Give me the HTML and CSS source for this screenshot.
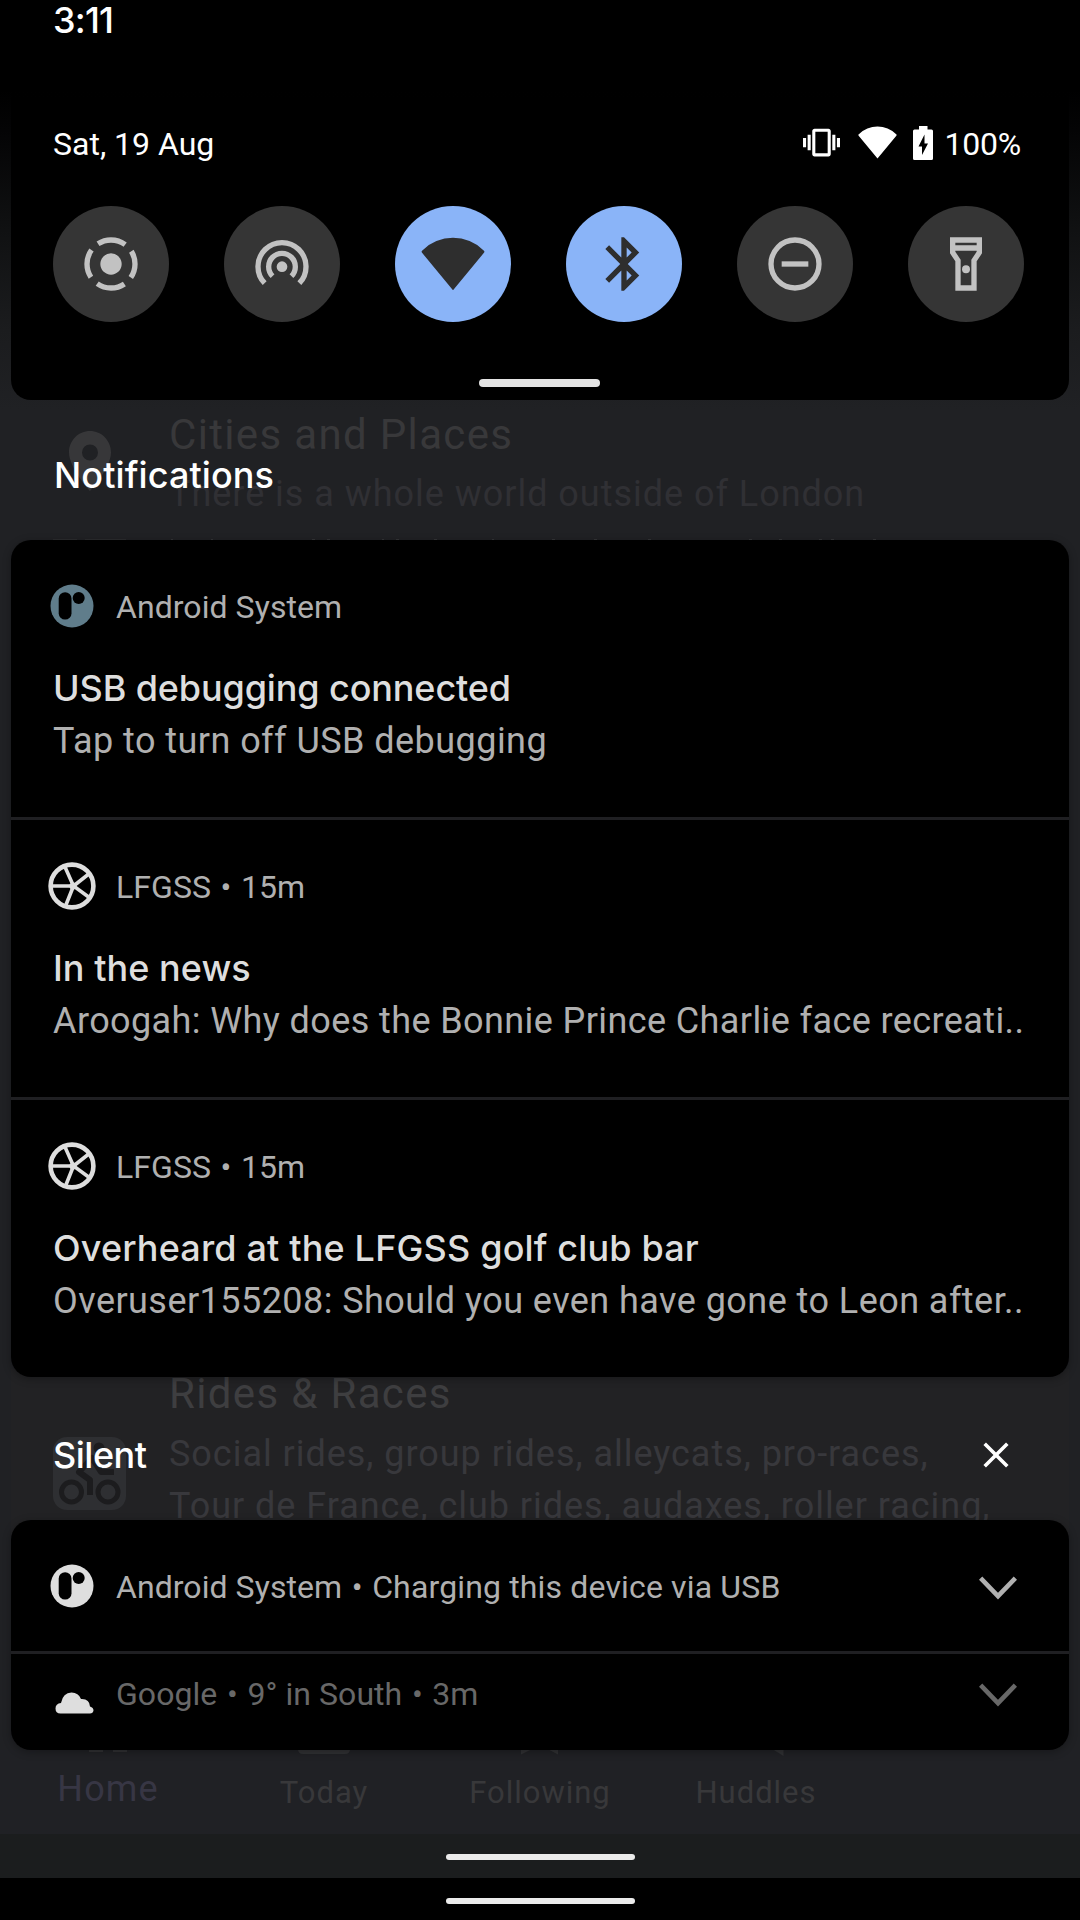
FILE: index.html
```html
<!DOCTYPE html>
<html lang="en">
<head>
<meta charset="utf-8">
<title>Notification shade</title>
<link rel="stylesheet" href="styles.css">
</head>
<body>
<svg class="defs" width="0" height="0" aria-hidden="true">
  <symbol id="wheel" viewBox="0 0 48 48">
    <circle cx="24" cy="24" r="21.400" fill="none" stroke="currentColor" stroke-width="4.600"/>
    <path d="M1.500 24H25.500M17 5 25.500 24 17.700 43.500M42 11 25.500 24 42 36" fill="none" stroke="currentColor" stroke-width="3.600"/>
    <circle cx="25" cy="24" r="3.600" fill="currentColor"/>
  </symbol>
  <symbol id="system" viewBox="0 0 48 48">
    <circle cx="24" cy="24" r="21.500" fill="currentColor"/>
    <rect x="10.700" y="10.200" width="12.800" height="27.400" rx="6.400" fill="#000"/>
    <circle cx="30.700" cy="16" r="6" fill="#000"/>
  </symbol>
  <symbol id="chevron" viewBox="0 0 38 24">
    <path d="M1.600 2.100 19 20.200 36.400 2.100" fill="none" stroke="currentColor" stroke-width="4.600"/>
  </symbol>
  <symbol id="wifi" viewBox="0 0 24 24">
    <path d="M12 21.800 0.400 7.800Q0 7.300.5 6.900A16.400 16.400 0 0 1 23.500 6.900Q24 7.300 23.600 7.800Z" fill="currentColor"/>
  </symbol>
</svg>

<div class="screen">
  <div class="app">
    <article class="forum forum-cities">
      <div class="forum-icon">
        <svg class="pin" width="73" height="62" viewBox="0 0 73 62"><path fill-rule="evenodd" d="M37 0C25.400 0 16 9.400 16 21.500 16 37 37 60 37 60S58 37 58 21.500C58 9.400 48.600 0 37 0ZM37 13.500a8 8 0 1 1 0 16 8 8 0 0 1 0-16Z" fill="#373739"/></svg>
        <svg class="next-icon" width="73" height="2" viewBox="0 0 73 2"><path d="M0 0h24v2H0zM32 0h41v2H32z" fill="#2b2c2e"/></svg>
      </div>
      <div class="forum-body">
        <h3>Cities and Places</h3>
        <p>There is a whole world outside of London</p>
        <svg class="cut-line" width="600" height="2" viewBox="0 0 600 2"><path d="M2 0h2v2h-2zM42 0h2v2h-2zM143 0h3v2h-3zM158 0h3v2h-3zM213 0h2v2h-2zM227 0h3v2h-3zM265 0h3v2h-3zM323 0h2v2h-2zM383 0h3v2h-3zM425 0h3v2h-3zM479 0h3v2h-3zM580 0h3v2h-3zM610 0h3v2h-3zM650 0h3v2h-3zM662 0h3v2h-3zM704 0h3v2h-3z"/></svg>
      </div>
    </article>
    <article class="forum forum-rides">
      <svg class="bike" width="73" height="73" viewBox="0 0 73 73">
        <rect width="73" height="73" rx="14" fill="#2e2f32"/>
        <g fill="none" stroke="#1c1c1e" stroke-width="5"><circle cx="18.500" cy="55" r="10"/><circle cx="55" cy="55" r="10"/><path d="M37 58V43L26 35 39 21 48 35H61" stroke-width="6" stroke-linejoin="round"/></g>
        <circle cx="46" cy="11" r="5.500" fill="#1c1c1e"/>
      </svg>
      <div class="forum-body">
        <h3>Rides &amp; Races</h3>
        <p>Social rides, group rides, alleycats, pro-races,<br>Tour de France, club rides, audaxes, roller racing,</p>
      </div>
    </article>
    <nav class="tabs">
      <div class="tab active"><svg width="60" height="12"><path d="M11 0h14v7H11zM35 0h14v7H35z"/></svg><span>Home</span></div>
      <div class="tab"><svg width="60" height="12"><path d="M4 0h52v4q0 5-5 5H9q-5 0-5-5z"/></svg><span>Today</span></div>
      <div class="tab"><svg width="60" height="12"><path d="M11 0v9.500L30 0 48 9.500V0z"/></svg><span>Following</span></div>
      <div class="tab"><svg width="60" height="12"><path d="M40 0 57.500 11V0z"/></svg><span>Huddles</span></div>
    </nav>
    <div class="app-gesture"><i class="pill"></i></div>
  </div>

  <div class="shade">
    <div class="clock">3:11</div>
    <section class="quick">
      <div class="quick-top">
        <span class="date">Sat, 19 Aug</span>
        <span class="status">
          <svg class="vibrate" width="37" height="37" viewBox="0 0 24 24"><path fill="#fff" d="M0 15h2V9H0v6zm3 2h2V7H3v10zm19-8v6h2V9h-2zm-3 8h2V7h-2v10zM16.500 3h-9C6.670 3 6 3.670 6 4.500v15c0 .83.67 1.500 1.500 1.500h9c.83 0 1.500-.67 1.500-1.500v-15c0-.83-.67-1.500-1.500-1.500zM16 19H8V5h8v14z"/></svg>
          <svg class="wifi" width="39" height="39"><use href="#wifi"/></svg>
          <svg class="battery" width="20" height="34" viewBox="0 0 20 34"><path fill="#fff" d="M6 0h8.500v3.500H18.500Q20 3.500 20 5V32.500Q20 34 18.500 34H1.500Q0 34 0 32.500V5Q0 3.500 1.500 3.500H6Z"/><path fill="#000" d="M11.500 8.500 5.500 20.500H9V29L15 17.500H11.500Z"/></svg>
          <span class="percent">100%</span>
        </span>
      </div>
      <div class="tiles">
        <div class="tile"><svg viewBox="0 0 24 24"><circle cx="12" cy="12" r="4" fill="currentColor"/><circle cx="12" cy="12" r="9" fill="none" stroke="currentColor" stroke-width="2" stroke-dasharray="10.800 3.337" stroke-dashoffset="5.400"/></svg></div>
        <div class="tile"><svg viewBox="0 0 24 24"><circle cx="12" cy="13" r="2" fill="currentColor"/><path d="M8.460 16.540A5 5 0 1 1 15.540 16.540M5.500 19.200A9 9 0 1 1 18.500 19.200" fill="none" stroke="currentColor" stroke-width="2"/></svg></div>
        <div class="tile on"><svg viewBox="0 0 24 24"><use href="#wifi"/></svg></div>
        <div class="tile on"><svg viewBox="0 0 24 24"><path fill="currentColor" d="M17.710 7.710L12 2h-1v7.590L6.410 5 5 6.410 10.590 12 5 17.590 6.410 19 11 14.410V22h1l5.710-5.710-4.300-4.290 4.300-4.290zM13 5.830l1.880 1.880L13 9.590V5.830zm1.880 10.460L13 18.170v-3.760l1.880 1.880z"/></svg></div>
        <div class="tile"><svg viewBox="0 0 24 24"><circle cx="12" cy="12" r="9" fill="none" stroke="currentColor" stroke-width="2"/><path d="M7 11h10v2H7z" fill="currentColor"/></svg></div>
        <div class="tile"><svg viewBox="0 0 24 24"><path fill="currentColor" fill-rule="evenodd" d="M6 2h12v6l-2 3v11H8V11L6 8zM8 4v1h8V4zM8 7v.4l2 3V20h4v-9.600l2-3V7z"/><circle cx="12" cy="14" r="1.500" fill="currentColor"/></svg></div>
      </div>
      <i class="handle"></i>
    </section>

    <header class="group-head first"><h2>Notifications</h2></header>
    <section class="card">
      <article class="note">
        <div class="meta"><svg class="icon slate"><use href="#system"/></svg><span>Android System</span></div>
        <h4>USB debugging connected</h4>
        <p>Tap to turn off USB debugging</p>
      </article>
      <article class="note">
        <div class="meta"><svg class="icon"><use href="#wheel"/></svg><span>LFGSS</span><b>•</b><span>15m</span></div>
        <h4 class="news">In the news</h4>
        <p class="news-text">Aroogah: Why does the Bonnie Prince Charlie face recreati..</p>
      </article>
      <article class="note">
        <div class="meta"><svg class="icon"><use href="#wheel"/></svg><span>LFGSS</span><b>•</b><span>15m</span></div>
        <h4 class="golf">Overheard at the LFGSS golf club bar</h4>
        <p>Overuser155208: Should you even have gone to Leon after..</p>
      </article>
    </section>

    <header class="group-head silent"><h2>Silent</h2>
      <svg class="close" width="26" height="26" viewBox="0 0 26 26"><path d="M1.700 1.700 24.300 24.300M24.300 1.700 1.700 24.300" stroke="#fff" stroke-width="3.600"/></svg>
    </header>
    <section class="card">
      <article class="line">
        <div class="meta"><svg class="icon"><use href="#system"/></svg><span>Android System</span><b>•</b><span class="summary">Charging this device via USB</span></div>
        <svg class="chevron"><use href="#chevron"/></svg>
      </article>
      <article class="line collapsed">
        <div class="meta"><svg class="icon cloud" viewBox="0 0 48 48"><path d="M12.500 34.500Q7.500 34.500 7.500 29.500 7.500 24.500 13 24 15 13.500 23.500 13.500 30.500 13.500 33 20 41.500 19.500 42 27.500 45.500 28.500 45.500 31.500 45 34.500 42 34.500Z" fill="currentColor"/></svg><span>Google</span><b>•</b><span>9° in South</span><b>•</b><span>3m</span></div>
        <svg class="chevron"><use href="#chevron"/></svg>
      </article>
    </section>
    <div class="gesture"><i class="pill"></i></div>
  </div>
</div>
</body>
</html>
```
FILE: styles.css
```css
* { box-sizing: border-box; margin: 0; padding: 0; }
body { width: 1080px; height: 1920px; overflow: hidden; background: #000; font-family: Roboto, "Liberation Sans", sans-serif; color: #fff; }
.defs { position: absolute; }
svg { display: block; flex: none; }

.screen { position: relative; width: 1080px; height: 1920px; overflow: hidden; background: #000; }

/* Dimmed application behind the shade */
.app {
  position: absolute; inset: 0 0 42px 0;
  display: flex; flex-direction: column;
  padding-top: 410px;
  background: linear-gradient(#000 90px, #040405 130px, #101112 230px, #1b1c1e 330px, #202124 410px);
}
.forum { display: flex; padding-left: 53px; }
.forum-cities { height: 130px; }
.forum-rides { height: 381px; margin-top: 829px; background: linear-gradient(#222224, #222224) 11px 0 / 1058px 200px no-repeat; }
.forum-body { padding-left: 43px; }
.forum h3 { font: 400 42px/50px Roboto, sans-serif; letter-spacing: 1.34px; color: #38383a; }
.forum p { font-size: 36px; line-height: 52px; letter-spacing: .97px; color: #303034; margin-top: 8px; white-space: nowrap; }
.forum-rides h3 { color: #3e3e40; }
.forum-rides p { color: #38383c; margin-top: 9px; }
.pin { margin-top: 21px; }
.next-icon { margin-top: 46px; }
.bike { margin-top: 68px; }
.cut-line { margin-top: 19px; fill: #343537; overflow: visible; }

.tabs { display: grid; grid-template-columns: repeat(5, 1fr); height: 84px; margin-top: auto; background: #202125; }
.tab { display: flex; flex-direction: column; align-items: center; font-size: 31px; line-height: 40px; letter-spacing: .97px; color: #38383a; }
.tab svg { margin: -5px 0 15px; fill: #303133; }
.tab span { height: 40px; }
.tab:not(.active) svg { margin-bottom: 16px; }
.tab.active { font-size: 36px; letter-spacing: 1.1px; color: #373644; }
.tab.active svg { margin-bottom: 12px; }
.app-gesture { flex: none; height: 44px; padding-top: 20px; background: #1b1d1e; }

.pill { display: block; width: 189px; height: 6px; margin: 0 auto; border-radius: 3px; background: #ebebeb; }

/* Pulled-down shade */
.shade { position: relative; height: 1920px; display: flex; flex-direction: column; padding: 0 11px; }
.clock { height: 40px; padding-left: 42px; font: 500 36px/40px Inter, sans-serif; letter-spacing: -.8px; }

.quick { height: 360px; padding: 84px 48px 0 42px; background: linear-gradient(transparent, #000 60px); border-radius: 0 0 20px 20px; }
.quick-top { display: flex; justify-content: space-between; align-items: center; height: 40px; font-size: 32px; line-height: 40px; }
.status { display: flex; align-items: center; }
.status svg { margin-bottom: 3px; }
.status .wifi { margin-left: 18.500px; margin-bottom: 4px; }
.battery { margin-left: 16px; }
.percent { margin-left: 11px; letter-spacing: -.2px; }
.tiles { display: flex; gap: 55px; margin-top: 42px; }
.tile { flex: none; display: flex; align-items: center; justify-content: center; width: 116px; height: 116px; border-radius: 50%; background: #353535; color: #c2c2c2; }
.tile svg { width: 64px; height: 64px; margin-bottom: 1px; }
.tile.on { background: #8ab4f8; color: #2e2e2e; }
.handle { display: block; width: 121px; height: 8px; margin: 57px 0 0 426px; border-radius: 4px; background: #e4e4e4; }

.group-head { display: flex; justify-content: space-between; align-items: center; height: 40px; margin-bottom: 45px; padding: 0 60px 0 43px; }
.group-head h2 { font: 500 36px/40px Inter, sans-serif; letter-spacing: .1px; }
.group-head.first { margin-top: 55px; }
.group-head.silent { margin-top: 58px; padding-left: 42px; }
.group-head.silent h2 { letter-spacing: -.5px; }

.card { display: flex; flex-direction: column; gap: 3px; border-radius: 20px; overflow: hidden; background: #1f1f22; box-shadow: 0 2px 8px rgba(0, 0, 0, .3); }
.note { height: 277px; padding: 47px 42px 0; background: #000; }
.meta { display: flex; align-items: center; height: 40px; margin-left: -5px; font-size: 32px; line-height: 40px; letter-spacing: .06px; color: #b0b0b0; white-space: nowrap; }
.meta b { width: 30px; text-align: center; font-weight: 400; }
.meta .summary { letter-spacing: .15px; }
.icon { width: 48px; height: 48px; margin: 0 20px 3px 0; color: #dedede; }
.icon.slate { color: #607d8b; }
.note h4 { margin-top: 41px; font: 500 36px/40px Inter, sans-serif; letter-spacing: -.12px; color: #dedede; white-space: nowrap; }
.note h4.news { letter-spacing: .05px; }
.note h4.golf { letter-spacing: .16px; }
.note p { margin-top: 13px; font-size: 36px; line-height: 40px; letter-spacing: .45px; color: #b0b0b0; white-space: nowrap; }
.note p.news-text { letter-spacing: .4px; }

.line { display: flex; justify-content: space-between; height: 131px; padding: 47px 52px 0 42px; background: #000; }
.chevron { width: 38px; height: 24px; margin-top: 9px; color: #b0b0b0; }
.line.collapsed { height: 96px; padding-top: 20px; }
.collapsed .meta { color: #686868; }
.collapsed .chevron { margin-top: 9px; color: #686868; }
.icon.cloud { margin: 17px 20px 0 0; color: #dedede; }

.gesture { margin: auto -11px 0; height: 42px; padding-top: 20px; background: #000; }
```
